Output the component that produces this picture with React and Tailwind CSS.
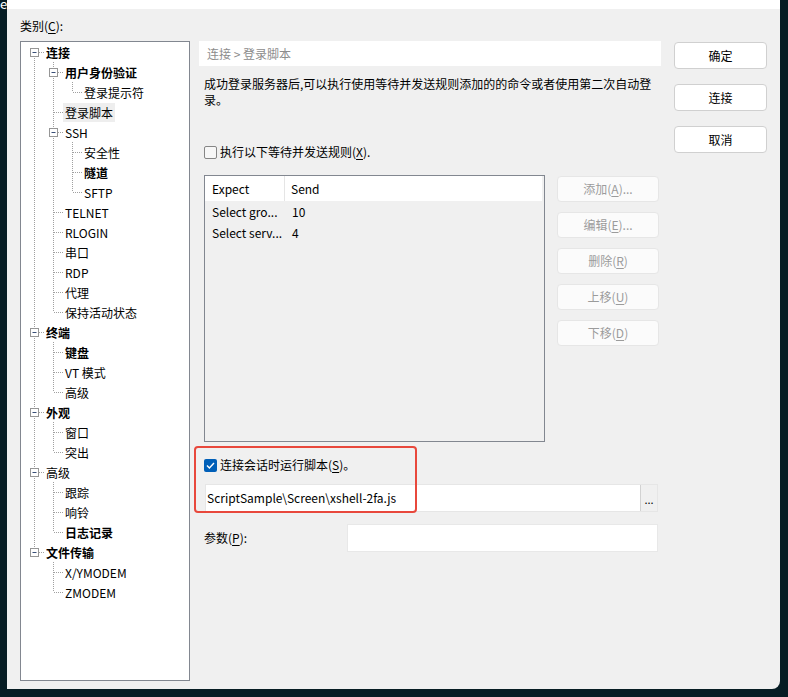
import React from "react";

const tree = [
  {
    t: "连接",
    b: true,
    c: [
      { t: "用户身份验证", b: true, c: [{ t: "登录提示符" }] },
      { t: "登录脚本", sel: true },
      { t: "SSH", c: [{ t: "安全性" }, { t: "隧道", b: true }, { t: "SFTP" }] },
      { t: "TELNET" },
      { t: "RLOGIN" },
      { t: "串口" },
      { t: "RDP" },
      { t: "代理" },
      { t: "保持活动状态" },
    ],
  },
  { t: "终端", b: true, c: [{ t: "键盘", b: true }, { t: "VT 模式" }, { t: "高级" }] },
  { t: "外观", b: true, c: [{ t: "窗口" }, { t: "突出" }] },
  { t: "高级", c: [{ t: "跟踪" }, { t: "响铃" }, { t: "日志记录", b: true }] },
  { t: "文件传输", b: true, c: [{ t: "X/YMODEM" }, { t: "ZMODEM" }] },
];

const rows = [];
const walk = (nodes, level, guides) => {
  nodes.forEach((n, i) => {
    const last = i === nodes.length - 1;
    const first = i === 0 && level === 0;
    rows.push({ ...n, level, guides, last, first });
    if (n.c) walk(n.c, level + 1, [...guides, !last]);
  });
};
walk(tree, 0, []);

const DOT = "#a0a0a0";

function GuideCell({ on }) {
  return (
    <svg width="19" height="20" className="shrink-0">
      {on && <line x1="9.5" y1="0" x2="9.5" y2="20" stroke={DOT} strokeDasharray="1 1" />}
    </svg>
  );
}

function NodeCell({ row }) {
  const y1 = row.first ? 10 : 0;
  const y2 = row.last ? 10 : 20;
  return (
    <svg width="19" height="20" className="shrink-0">
      <line x1="9.5" y1={y1} x2="9.5" y2={y2} stroke={DOT} strokeDasharray="1 1" />
      <line x1="10" y1="10.5" x2="19" y2="10.5" stroke={DOT} strokeDasharray="1 1" />
      {row.c && (
        <g>
          <rect x="5.5" y="6.5" width="8" height="8" fill="#fff" stroke="#969696" />
          <line x1="7.5" y1="10.5" x2="11.5" y2="10.5" stroke="#3a5078" />
        </g>
      )}
    </svg>
  );
}

const U = ({ children }) => <span className="underline underline-offset-2">{children}</span>;

function GrayButton({ children }) {
  return (
    <div className="h-[26px] flex items-center justify-center rounded-[4px] border border-[#e6e6e6] bg-[#fbfbfb] text-[#9b9b9b]">
      {children}
    </div>
  );
}

function DialogButton({ children }) {
  return (
    <div className="h-[27px] flex items-center justify-center rounded-[4px] border border-[#d0d0d0] bg-white text-black">
      {children}
    </div>
  );
}

export default function App() {
  return (
    <div
      className="w-[788px] h-[697px] bg-[#071d24] flex overflow-hidden text-[12px] text-black"
      style={{ fontFamily: '"Noto Sans CJK SC", "Noto Sans", sans-serif' }}
    >
      <div className="w-[7px] shrink-0 text-white text-[13px] leading-[8px] overflow-hidden">e</div>
      <div className="w-[773px] h-[689px] bg-[#f0f0f0] rounded-br-[8px] flex flex-col">
        <div className="h-[9px] bg-white" />
        <div className="flex pl-[13px]">
          {/* left: category tree */}
          <div className="w-[170px] flex flex-col">
            <div className="mt-[9px] leading-[16px]">
              类别(<U>C</U>):
            </div>
            <div className="mt-[7px] h-[640px] bg-white border border-[#828790] pl-[4px]">
              {rows.map((r, i) => (
                <div key={i} className="flex items-center h-[20px]">
                  {r.guides.map((g, j) => (
                    <GuideCell key={j} on={g} />
                  ))}
                  <NodeCell row={r} />
                  <span
                    className={`ml-[2px] leading-[19px] whitespace-nowrap ${r.b ? "font-bold" : ""} ${
                      r.sel ? "bg-[#eeeeee] px-[2px] relative -left-[2px]" : ""
                    }`}
                  >
                    {r.t}
                  </span>
                </div>
              ))}
            </div>
          </div>

          {/* middle: settings */}
          <div className="ml-[9px] w-[462px] flex flex-col mt-[32px]">
            <div className="h-[25px] bg-white flex items-center pl-[8px] text-[#8c8c8c]">
              连接 &gt; 登录脚本
            </div>
            <div className="ml-[5px] mt-[10px] w-[456px] leading-[16px]">
              成功登录服务器后,可以执行使用等待并发送规则添加的的命令或者使用第二次自动登录。
            </div>
            <div className="ml-[5px] mt-[36px] h-[16px] flex items-center">
              <div className="w-[13px] h-[13px] border border-[#868686] rounded-[2px] bg-[#f7f7f7]" />
              <span className="ml-[3px]">
                执行以下等待并发送规则(<U>X</U>).
              </span>
            </div>
            <div className="ml-[5px] mt-[15px] flex">
              <div className="w-[341px] h-[267px] border border-[#828790] bg-[#f0f0f0] flex flex-col">
                <div className="h-[25px] bg-white flex items-center mr-[2px]">
                  <div className="w-[80px] h-full flex items-center pl-[7px] border-r border-[#e5e5e5]">Expect</div>
                  <div className="pl-[6px]">Send</div>
                </div>
                {[
                  ["Select gro...", "10"],
                  ["Select serv...", "4"],
                ].map(([a, b]) => (
                  <div key={a} className="h-[21px] flex items-center">
                    <div className="w-[80px] pl-[7px]">{a}</div>
                    <div className="pl-[7px]">{b}</div>
                  </div>
                ))}
              </div>
              <div className="ml-[12px] mt-[1px] w-[102px] flex flex-col gap-[10px]">
                <GrayButton>
                  添加(<U>A</U>)...
                </GrayButton>
                <GrayButton>
                  编辑(<U>E</U>)...
                </GrayButton>
                <GrayButton>
                  删除(<U>R</U>)
                </GrayButton>
                <GrayButton>
                  上移(<U>U</U>)
                </GrayButton>
                <GrayButton>
                  下移(<U>D</U>)
                </GrayButton>
              </div>
            </div>

            <div className="relative mt-[5px] flex flex-col">
              <div className="ml-[5px] mt-[11px] h-[14px] flex items-center">
                <div className="w-[13px] h-[13px] rounded-[2px] bg-[#005fb8] flex items-center justify-center">
                  <svg width="11" height="11" viewBox="0 0 11 11">
                    <path d="M2 5.6 L4.4 8 L9 3" fill="none" stroke="#fff" strokeWidth="1.4" />
                  </svg>
                </div>
                <span className="ml-[3px]">
                  连接会话时运行脚本(<U>S</U>)。
                </span>
              </div>
              <div className="ml-[6px] mt-[12px] w-[453px] h-[28px] bg-white border border-[#e6e6e6] flex items-center">
                <span className="pl-[1px] flex-1">ScriptSample\Screen\xshell-2fa.js</span>
                <div className="w-[17px] h-full bg-[#f0f0f0] border-l border-[#d2d2d2] flex items-end justify-center pb-[6px] leading-none text-[11px]">
                  ...
                </div>
              </div>
              <div className="absolute -top-[1px] -left-[5px] w-[223px] h-[67px] border-2 border-[#e8483c] rounded-[4px]" />
            </div>

            <div className="mt-[12px] flex items-center">
              <span className="ml-[5px] w-[143px]">
                参数(<U>P</U>):
              </span>
              <div className="w-[311px] h-[28px] bg-white border border-[#e8e8e8]" />
            </div>
          </div>

          {/* right: dialog buttons */}
          <div className="ml-[13px] w-[93px] mt-[33px] flex flex-col gap-[15px]">
            <DialogButton>确定</DialogButton>
            <DialogButton>连接</DialogButton>
            <DialogButton>取消</DialogButton>
          </div>
        </div>
      </div>
    </div>
  );
}
